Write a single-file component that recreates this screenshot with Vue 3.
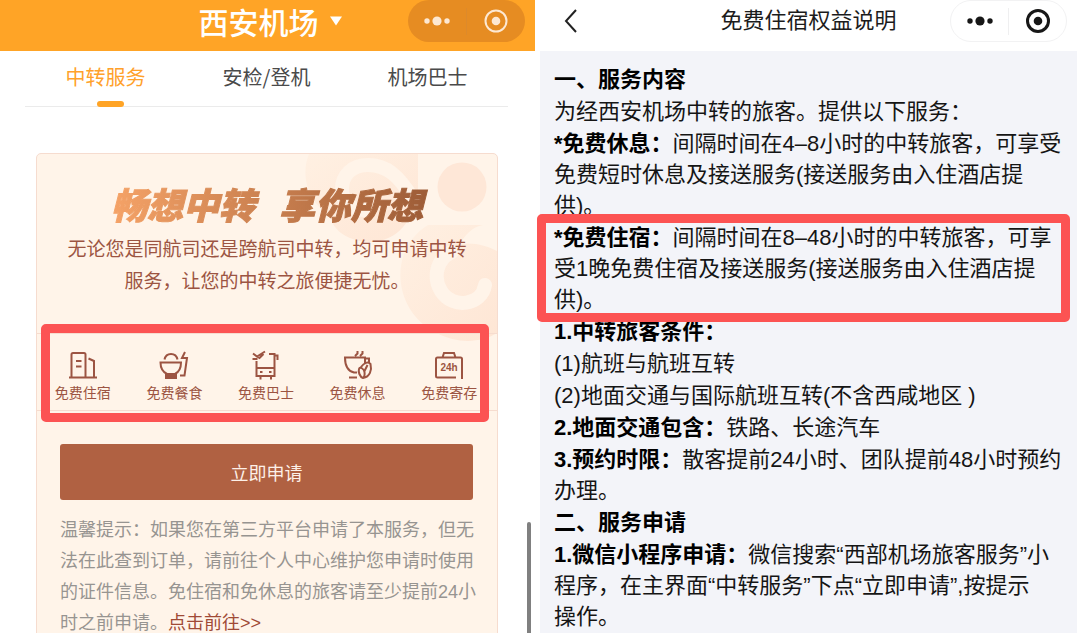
<script setup>
const tabs = ['中转服务', '安检/登机', '机场巴士']
const features = [
  { id: 'hotel', label: '免费住宿' },
  { id: 'meal', label: '免费餐食' },
  { id: 'bus', label: '免费巴士' },
  { id: 'rest', label: '免费休息' },
  { id: 'luggage', label: '免费寄存' }
]
</script>

<template>
  <div class="stage">
    <section class="panel service">
      <header class="bar bar-orange">
        <button class="airport" type="button">
          西安机场
          <svg width="14" height="10" viewBox="0 0 14 10" aria-hidden="true"><path d="M1 0.5H13L7 9.5Z" fill="#fff" /></svg>
        </button>
        <div class="capsule capsule-dark">
          <button type="button" aria-label="更多">
            <svg width="26" height="26" viewBox="0 0 26 26"><circle cx="3" cy="13" r="2.7" /><circle cx="13" cy="13" r="4.6" /><circle cx="23" cy="13" r="2.7" /></svg>
          </button>
          <button type="button" aria-label="关闭">
            <svg width="26" height="26" viewBox="0 0 26 26"><circle class="ring" cx="13" cy="13" r="10.5" /><circle cx="13" cy="13" r="4.3" /></svg>
          </button>
        </div>
      </header>

      <nav class="tabs">
        <a v-for="(tab, i) in tabs" :key="tab" href="#" :class="{ active: i === 0 }">{{ tab }}</a>
      </nav>

      <article class="card">
        <svg class="pattern" width="194" height="188" viewBox="0 0 194 188" aria-hidden="true">
          <defs>
            <linearGradient id="peach" x1="0" y1="0" x2="1" y2="1">
              <stop offset="0" stop-color="#fff0e2" />
              <stop offset="1" stop-color="#fee6d5" />
            </linearGradient>
          </defs>
          <path d="M6 0H115V40C110 65 96 87 68 88C40 88 26 70 28 61C8 52-4 24 6 0Z" fill="url(#peach)" />
          <path d="M110 45C96 22 84 11 65 11C49 11 39 21 39 35C39 50 50 56 62 56" fill="none" stroke="#fff4e9" stroke-width="14" stroke-linecap="round" />
          <circle cx="159" cy="33" r="24.5" fill="#fee7d7" />
          <path d="M125 71H180C169 73 162 81 157 90C172 88 184 92 194 97V179C178 189 154 190 134 179C90 158 84 96 125 71Z" fill="url(#peach)" />
          <path d="M149 98C133 105 130 124 138 137C150 156 179 151 182 131" fill="none" stroke="#fff4e9" stroke-width="14" stroke-linecap="round" />
        </svg>

        <h1><span>畅想中转</span><span>享你所想</span></h1>
        <p class="intro">无论您是同航司还是跨航司中转，均可申请中转<br />服务，让您的中转之旅便捷无忧。</p>

        <div class="features">
          <ul>
            <li v-for="f in features" :key="f.id">
              <svg width="30" height="30" viewBox="0 0 30 30" aria-hidden="true">
                <g v-if="f.id === 'hotel'">
                  <path d="M3.5 27V4.5Q3.5 3 5 3H16Q17.5 3 17.5 4.5V27M1 27.5H29M20.5 8.5L26 11V27M8 11H13.5M8 16.5H13.5" />
                </g>
                <g v-else-if="f.id === 'meal'">
                  <path d="M1.5 12.5H22C22 18 20 22 16 24H8C4 22 1.5 18 1.5 12.5ZM7 24V28H17V24M7 26H17M5.5 9.5C7 2 17 2 18.5 9.5M26 2L23 8H28L25.5 25.5H21" />
                </g>
                <g v-else-if="f.id === 'bus'">
                  <path d="M5.5 11V26H23.5V4H18M5.5 18H23.5M23.5 5.5H26.5V10M9.5 26V29.5M20 26V29.5M9 22H11.5M18 22H20.5M2 3.5L6 6.5L14 1.5M6 6.5L8.5 8L12.5 4M1.5 9H6.5" />
                </g>
                <g v-else-if="f.id === 'rest'">
                  <path d="M14 22.5H11C4.5 21 2 15 2 7.5H22V13M22 8.5H26V13M6 27.5H14M12 6L14.5 3.5V1M17 6L19.5 3.5V1" />
                  <path d="M16 19C17 16 21 19 21.5 22C22 25 21 28 20 28C17 27 15 22 16 19ZM18 17C21 13 25 11 27.5 14C29 20 27 27 20 28M21.5 21L24.5 15" />
                </g>
                <g v-else>
                  <path d="M22 27.5H3.5Q2 27.5 2 26V9Q2 7.5 3.5 7.5H26.5Q28 7.5 28 9V29M8.5 7.5L10 3H20L21.5 7.5" />
                  <text x="15" y="21" text-anchor="middle">24h</text>
                </g>
              </svg>
              <span>{{ f.label }}</span>
            </li>
          </ul>
          <div class="mark mark-features"></div>
        </div>

        <button class="apply" type="button">立即申请</button>
        <p class="tip">
          温馨提示：如果您在第三方平台申请了本服务，但无<br />法在此查到订单，请前往个人中心维护您申请时使用<br />的证件信息。免住宿和免休息的旅客请至少提前24小<br />时之前申请。<a href="#">点击前往&gt;&gt;</a>
        </p>
      </article>
      <div class="scrollbar"></div>
    </section>

    <section class="panel detail">
      <header class="bar bar-white">
        <button class="back" type="button" aria-label="返回">
          <svg width="16" height="26" viewBox="0 0 16 26"><path d="M13 2L3 13L13 24" /></svg>
        </button>
        <h2>免费住宿权益说明</h2>
        <div class="capsule capsule-light">
          <button type="button" aria-label="更多">
            <svg width="26" height="26" viewBox="0 0 26 26"><circle cx="3" cy="13" r="2.7" /><circle cx="13" cy="13" r="4.6" /><circle cx="23" cy="13" r="2.7" /></svg>
          </button>
          <button type="button" aria-label="关闭">
            <svg width="26" height="26" viewBox="0 0 26 26"><circle class="ring" cx="13" cy="13" r="10.5" /><circle cx="13" cy="13" r="4.3" /></svg>
          </button>
        </div>
      </header>
      <div class="terms">
        <p><b>一、服务内容</b></p>
        <p>为经西安机场中转的旅客。提供以下服务：</p>
        <p><b>*免费休息：</b>间隔时间在4–8小时的中转旅客，可享受<br />免费短时休息及接送服务(接送服务由入住酒店提<br />供)。</p>
        <p class="marked"><b>*免费住宿：</b>间隔时间在8–48小时的中转旅客，可享<br />受1晚免费住宿及接送服务(接送服务由入住酒店提<br />供)。<span class="mark mark-terms"></span></p>
        <p><b>1.中转旅客条件：</b></p>
        <p>(1)航班与航班互转</p>
        <p>(2)地面交通与国际航班互转(不含西咸地区 )</p>
        <p><b>2.地面交通包含：</b>铁路、长途汽车</p>
        <p><b>3.预约时限：</b>散客提前24小时、团队提前48小时预约<br />办理。</p>
        <p><b>二、服务申请</b></p>
        <p><b>1.微信小程序申请：</b>微信搜索“西部机场旅客服务”小<br />程序，在主界面“中转服务”下点“立即申请”,按提示<br />操作。</p>
      </div>
    </section>
  </div>
</template>

<style>
body {
  background: #fff;
}
</style>

<style scoped>
.stage {
  display: grid;
  grid-template-columns: 535fr 537fr;
  gap: 5px;
  padding-right: 3px;
  height: 100vh;
  overflow: hidden;
  font-family: "Liberation Sans", "Noto Sans CJK SC", sans-serif;
}
.stage * {
  box-sizing: border-box;
}
h1,
h2,
p,
ul {
  margin: 0;
  padding: 0;
}
button {
  border: 0;
  padding: 0;
  background: none;
  font-family: inherit;
  color: inherit;
}
a {
  text-decoration: none;
}
.panel {
  position: relative;
  min-width: 0;
}
.bar {
  display: grid;
  grid-template-columns: 1fr auto 1fr;
  height: 51px;
  padding: 0 10px;
}
.bar-orange {
  background: #ffa426;
  color: #fff;
}
.airport {
  grid-column: 2;
  display: flex;
  align-items: center;
  gap: 10px;
  height: 42px;
  padding-left: 6px;
  font-size: 30px;
  font-weight: 500;
}
.capsule {
  grid-column: 3;
  justify-self: end;
  display: flex;
  align-items: center;
  width: 117px;
  height: 42px;
  border-radius: 21px;
}
.capsule button {
  flex: 1;
  display: flex;
  align-items: center;
  justify-content: center;
  height: 27px;
}
.capsule button + button {
  border-left: 1px solid #dd8a2b;
}
.capsule svg {
  fill: currentColor;
}
.capsule .ring {
  fill: none;
  stroke: currentColor;
  stroke-width: 2;
}
.capsule-dark {
  background: #e68c22;
  color: #fde8d2;
}
.capsule-light {
  border: 1px solid #f2f2f3;
  color: #171717;
}
.capsule-light button + button {
  border-left-color: #efeff0;
}
.capsule-light .ring {
  stroke-width: 3;
}
.tabs {
  display: grid;
  grid-template-columns: repeat(3, 1fr);
  margin: 0 27px 0 25px;
  border-bottom: 1px solid #ebebeb;
}
.tabs a {
  position: relative;
  height: 55px;
  line-height: 52px;
  text-align: center;
  font-size: 20px;
  font-family: "Noto Sans CJK SC", sans-serif;
  color: #4a4a4a;
}
.tabs .active {
  color: #ffa12b;
}
.tabs .active::after {
  content: "";
  position: absolute;
  left: calc(50% - 9px);
  bottom: -1px;
  width: 27px;
  height: 6px;
  border-radius: 3px;
  background: #ffa426;
}
.card {
  position: relative;
  margin: 46px 37px 0 36px;
  padding-top: 33px;
  height: 560px;
  border: 1px solid #f6dccf;
  border-radius: 5px;
  background: #fff4e9;
}
.pattern {
  position: absolute;
  top: 0;
  right: 0;
}
h1 {
  position: relative;
  display: flex;
  justify-content: center;
  gap: 24px;
  width: max-content;
  margin: 0 auto;
  padding: 0 6px;
  line-height: 40px;
  font-size: 36px;
  font-weight: 900;
  font-style: italic;
  color: transparent;
  -webkit-text-stroke: 1px transparent;
  background: linear-gradient(90deg, #f7a468, #9d5c37);
  background-clip: text;
  -webkit-background-clip: text;
}
.intro {
  position: relative;
  margin-top: 7px;
  text-align: center;
  white-space: nowrap;
  font-size: 19px;
  line-height: 32px;
  color: #9c5442;
}
.features {
  position: relative;
  margin-top: 35px;
  border: solid #f6dccf;
  border-width: 1px 0;
}
.features ul {
  display: grid;
  grid-template-columns: repeat(5, 1fr);
  padding-right: 2px;
  height: 76px;
  list-style: none;
}
.features li {
  display: flex;
  flex-direction: column;
  align-items: center;
  padding-top: 16px;
  font-size: 14px;
  line-height: 20px;
  color: #9c5442;
}
.features li span {
  margin-top: 3px;
  white-space: nowrap;
}
.features path {
  fill: none;
  stroke: #9c5442;
  stroke-width: 2;
}
.features text {
  fill: #9c5442;
  font-size: 10px;
  font-weight: 700;
}
.mark {
  position: absolute;
  border: 9px solid #fc5353;
  border-radius: 5px;
  pointer-events: none;
}
.mark-features {
  inset: -10px 8px -12px 4px;
}
.apply {
  display: block;
  width: calc(100% - 47px);
  height: 56px;
  margin: 33px 24px 0 23px;
  border-radius: 3px;
  background: #b06142;
  color: #fdf0e8;
  font-size: 18px;
}
.tip {
  margin: 15px 0 0 23px;
  white-space: nowrap;
  font-size: 18px;
  line-height: 31px;
  color: #979491;
}
.tip a {
  color: #a04a36;
}
.scrollbar {
  position: absolute;
  right: 4px;
  top: 522px;
  bottom: -6px;
  width: 4px;
  border-radius: 2px;
  background: #808080;
}
.detail {
  display: flex;
  flex-direction: column;
}
.back {
  justify-self: start;
  display: flex;
  align-items: center;
  height: 42px;
  padding-left: 13px;
}
.back path {
  fill: none;
  stroke: #222;
  stroke-width: 2;
}
h2 {
  line-height: 42px;
  font-size: 22px;
  font-weight: 400;
  color: #1c1c1c;
}
.terms {
  flex: 1;
  display: flex;
  flex-direction: column;
  gap: 1px;
  padding: 13px 14px 0;
  background: #f3f4f9;
  white-space: nowrap;
  font-size: 22px;
  line-height: 31px;
  color: #151515;
}
.terms b {
  color: #000;
}
.marked {
  position: relative;
}
.mark-terms {
  inset: -8px -7px -7px -17px;
}
</style>
